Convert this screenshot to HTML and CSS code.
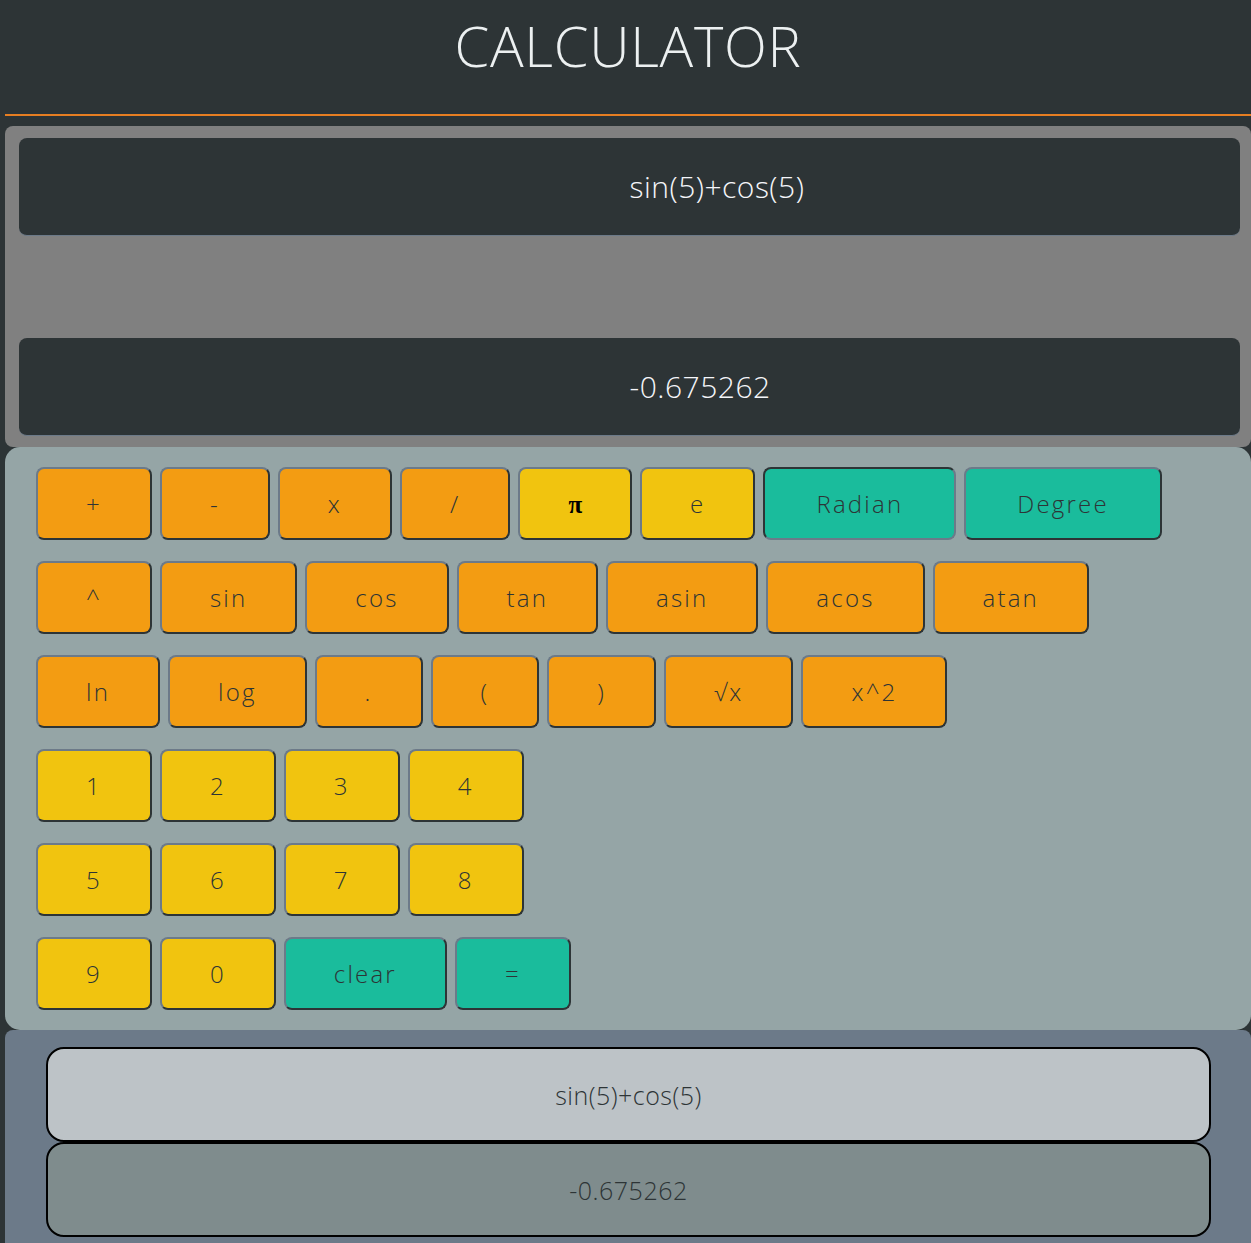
FILE: index.html
```html
<!DOCTYPE html>
<html lang="en">
<head>
  <meta charset="UTF-8">
  <title>Calculator</title>
  <link rel="stylesheet" href="styles.css">
</head>
<body>

  <!-- Title bar -->
  <header class="top-bar">
    <h1>CALCULATOR</h1>
  </header>

  <!-- Expression and result screens -->
  <div class="screen">
    <div class="screen-line" id="expression">sin(5)+cos(5)</div>
    <div class="screen-line" id="result">-0.675262</div>
  </div>

  <!-- Keypad -->
  <div class="keypad">
    <div class="key-row">
      <button class="key op">+</button>
      <button class="key op">-</button>
      <button class="key op">x</button>
      <button class="key op">/</button>
      <button class="key num"><span class="pi">&pi;</span></button>
      <button class="key num">e</button>
      <button class="key act mode on">Radian</button>
      <button class="key act mode">Degree</button>
    </div>
    <div class="key-row">
      <button class="key op">^</button>
      <button class="key op">sin</button>
      <button class="key op">cos</button>
      <button class="key op">tan</button>
      <button class="key op">asin</button>
      <button class="key op">acos</button>
      <button class="key op">atan</button>
    </div>
    <div class="key-row">
      <button class="key op">ln</button>
      <button class="key op">log</button>
      <button class="key op">.</button>
      <button class="key op">(</button>
      <button class="key op">)</button>
      <button class="key op">&radic;x</button>
      <button class="key op">x^2</button>
    </div>
    <div class="key-row">
      <button class="key num">1</button>
      <button class="key num">2</button>
      <button class="key num">3</button>
      <button class="key num">4</button>
    </div>
    <div class="key-row">
      <button class="key num">5</button>
      <button class="key num">6</button>
      <button class="key num">7</button>
      <button class="key num">8</button>
    </div>
    <div class="key-row">
      <button class="key num">9</button>
      <button class="key num">0</button>
      <button class="key act">clear</button>
      <button class="key act">=</button>
    </div>
  </div>

  <!-- History -->
  <div class="history">
    <div class="history-item expr">sin(5)+cos(5)</div>
    <div class="history-item answer">-0.675262</div>
  </div>

</body>
</html>
```

FILE: styles.css
```css
body {
  margin: 0;
  padding-left: 5px;
  background-color: #2d3436;
  font-family: "Open Sans", "Lato", sans-serif;
  font-weight: 300;
}

.top-bar {
  height: 114px;
  border-bottom: 2px solid #e67e22;
  text-align: center;
}

.top-bar h1 {
  margin: 0;
  padding-top: 7px;
  font-size: 56px;
  font-weight: 300;
  letter-spacing: 0.7px;
  color: #ecf0f1;
}

.screen {
  margin-top: 10px;
  background-color: #808080;
  border-radius: 8px;
  padding: 12px 11px 11px 14px;
  display: flex;
  flex-direction: column;
  gap: 102px;
}

.screen-line {
  height: 97px;
  display: flex;
  align-items: center;
  padding-left: 50%;
  background-color: #2d3436;
  border-bottom: 1px solid #6c7a89;
  border-radius: 8px;
  color: #f5f6fa;
  font-size: 30px;
  font-weight: 300;
  letter-spacing: 0.5px;
}

.keypad {
  background-color: #95a5a6;
  border-radius: 15px;
  padding: 20px 31px 20px;
  display: flex;
  flex-direction: column;
  gap: 21px;
}

.key-row {
  display: flex;
  gap: 8px;
}

.key {
  height: 73px;
  padding: 0 48px;
  font-family: inherit;
  font-size: 24px;
  font-weight: 300;
  letter-spacing: 2.2px;
  color: #2d3436;
  border: 2px solid;
  border-color: #6c7a89 #2d3436 #2d3436 #6c7a89;
  border-radius: 8px;
  cursor: pointer;
}

.op {
  background-color: #f39c12;
}

.num {
  background-color: #f1c40f;
}

.act {
  background-color: #1abc9c;
}

.mode {
  padding: 0 51px;
}

/* selected angle mode looks pressed in */
.act.on {
  border-color: #2d3436 #6c7a89 #6c7a89 #2d3436;
}

.pi {
  font-family: "Liberation Serif", serif;
  font-weight: bold;
  font-size: 25px;
  letter-spacing: 0;
  color: #000;
}

.history {
  background-color: #6c7a89;
  border-radius: 8px;
  padding: 17px 40px 40px 41px;
}

.history-item {
  height: 91px;
  display: flex;
  align-items: center;
  justify-content: center;
  border: 2px solid #000;
  border-radius: 18px;
  color: #2d3436;
  font-size: 25px;
  font-weight: 300;
  letter-spacing: 0.5px;
}

.history-item.expr {
  background-color: #bdc3c7;
}

.history-item.answer {
  background-color: #7f8c8d;
}
```
